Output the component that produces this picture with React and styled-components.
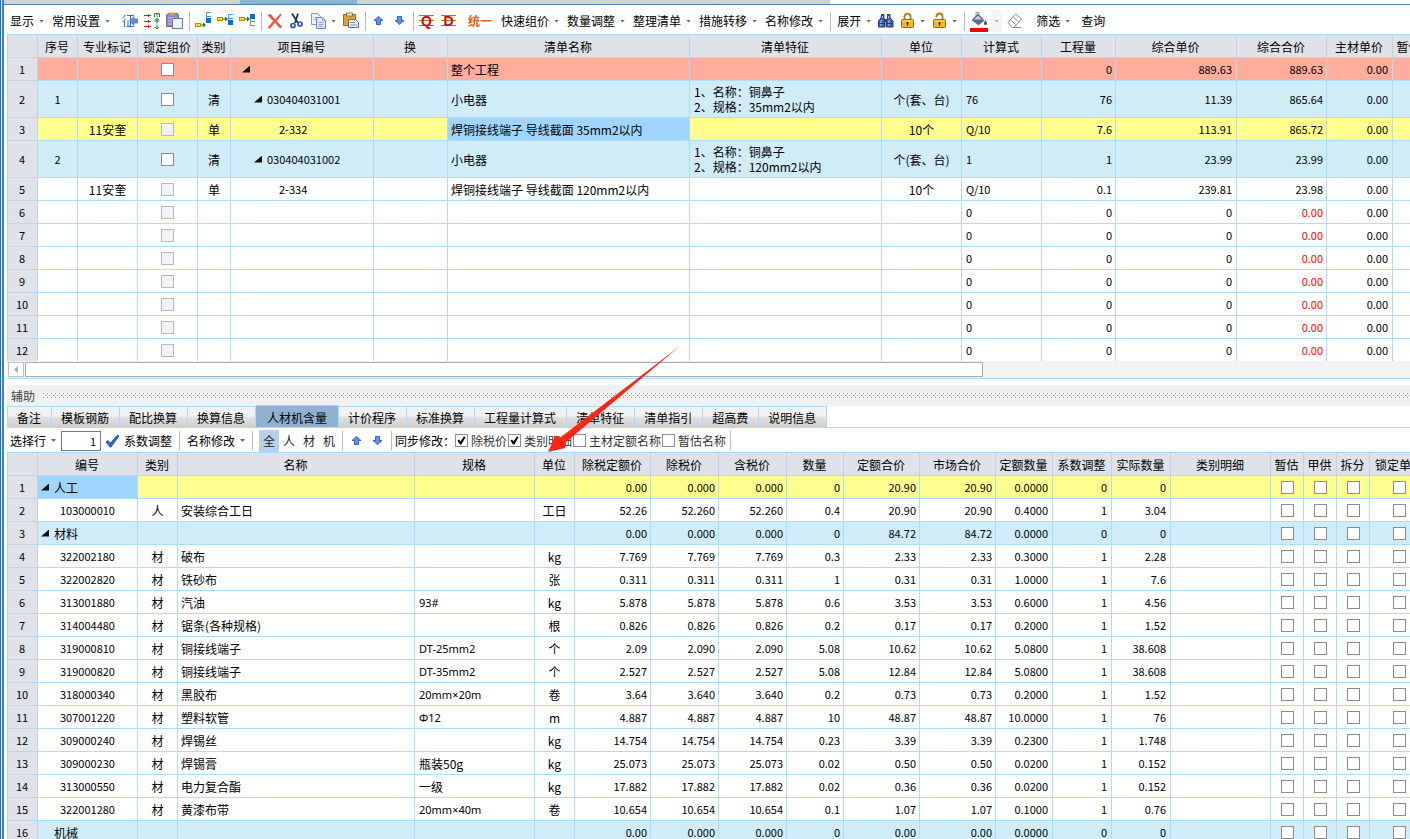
import React from 'react';
import styled, { createGlobalStyle, css } from 'styled-components';

const GlobalStyle = createGlobalStyle`
  * {
    box-sizing: border-box;
  }
  body {
    margin: 0;
    background: #fff;
    color: #000;
    font-family: "Noto Sans CJK SC", sans-serif;
    font-size: 12px;
    line-height: 16px;
  }
  button, input {
    font: inherit;
    color: inherit;
  }
`;

const Page = styled.div`
  position: relative;
  display: flex;
  height: 100vh;
  overflow: hidden;
`;
const WindowEdge = styled.div`
  flex: none;
  width: 4px;
  background: linear-gradient(90deg, #1272c4 0 1px, #dcebf7 1px 2px, #4a80b4 2px);
`;
const Main = styled.div`
  flex: 1;
  min-width: 0;
  display: flex;
  flex-direction: column;
`;

const DocTabs = styled.div`
  flex: none;
  display: flex;
  height: 5px;
  border-bottom: 1px solid #4a80b4;
`;
const DocTab = styled.div`
  width: 118px;
  background: ${(p) => (p.$active ? '#8fb1d2' : '#d3d3d3')};
  border-right: 1px solid #a9d8fb;
`;

const Toolbar = styled.div`
  flex: none;
  display: flex;
  align-items: center;
  height: ${(p) => p.$height}px;
  padding-top: ${(p) => p.$top || 0}px;
  padding-left: 2px;
  white-space: nowrap;
  overflow: hidden;
`;
const Group = styled.div`
  display: flex;
  align-items: center;
  margin-left: ${(p) => p.$lead || 0}px;
`;
const Separator = styled.span`
  flex: none;
  width: 1px;
  height: 19px;
  margin: 0 2px 0 3px;
  background: #b9b9b9;
`;
const ToolButton = styled.button`
  display: flex;
  align-items: center;
  gap: ${(p) => p.$gap || 5}px;
  padding: 0 4px;
  border: 0;
  background: none;
  color: ${(p) => p.$color || '#000'};
  font-weight: ${(p) => (p.$bold ? 700 : 400)};
`;
const IconButton = styled.button`
  display: flex;
  align-items: center;
  padding: 0 3px;
  border: 0;
  background: none;
`;
const Caret = styled.span`
  width: 5px;
  height: 3px;
  background: ${(p) => (p.$pale ? '#aaa' : '#666')};
  clip-path: polygon(0 0, 100% 0, 50% 100%);
`;
const DropButton = styled.button`
  display: flex;
  align-items: center;
  height: 22px;
  padding: ${(p) => (p.$shaded ? '0 3px' : '0 4px 0 1px')};
  border: 0;
  background: ${(p) => (p.$shaded ? '#f5f5f5' : 'none')};
`;
const KindButton = styled.button`
  width: 20px;
  height: 22px;
  padding: 0;
  border: 0;
  color: #222;
  background: ${(p) => (p.$active ? '#b9d1e8' : 'none')};
`;
const RowInput = styled.input`
  width: 40px;
  height: 20px;
  margin-left: 1px;
  padding: 0 4px;
  border: 1px solid #7a7a7a;
  font-size: 11px;
  text-align: right;
`;
const CheckLabel = styled.label`
  display: flex;
  align-items: center;
  gap: 3px;
  margin-right: 1px;
  color: #333;
`;
const CheckBox = styled.input`
  appearance: none;
  position: relative;
  flex: none;
  display: block;
  width: 13px;
  height: 13px;
  margin: 0;
  border: 1px solid #8c8c8c;
  background: #fff;
  &:disabled {
    border-color: #b9b9b9;
    background: #f2f3f6;
  }
  &:checked::after {
    content: '';
    position: absolute;
    inset: 1px;
    background: #000;
    clip-path: polygon(5% 50%, 22% 40%, 38% 62%, 76% 5%, 95% 10%, 48% 95%, 32% 95%);
  }
`;

const Pane = styled.div`
  flex: ${(p) => (p.$grow ? '1' : 'none')};
  min-height: 0;
  margin-left: 3px;
  border-top: 1px solid #a9dcfb;
  border-left: 1px solid #a9dcfb;
  overflow: hidden;
`;
const Grid = styled.table`
  table-layout: fixed;
  width: ${(p) => p.$width}px;
  border-collapse: separate;
  border-spacing: 0;
  th, td {
    height: 23px;
    padding: 0;
    border-right: 1px solid #aedcfb;
    border-bottom: 1px solid #aedcfb;
    overflow: hidden;
    white-space: nowrap;
    font-weight: 400;
    line-height: 15px;
  }
  th {
    padding-right: 1px;
    border-color: #c3d3e2;
    background: #dfe2e8;
    text-align: center;
  }
`;
const tones = {
  red: '#ffad9d',
  blue: '#cfecf7',
  yellow: '#ffff8f',
};
const Row = styled.tr`
  background: ${(p) => tones[p.$tone] || '#fff'};
  && > * {
    height: ${(p) => (p.$tall ? 37 : 23)}px;
  }
  ${(p) => p.$last && css`
    && > * {
      height: 22px;
      border-bottom: 0;
    }
  `}
`;
const RowHead = styled.th`
  font-size: 11px;
`;
const Cell = styled.td`
  && {
    padding: 0 ${(p) => p.$pad || 3}px;
    text-align: ${(p) => p.$align || 'left'};
    font-size: ${(p) => (p.$num ? 11 : 12)}px;
    color: ${(p) => p.$color || '#000'};
    background: ${(p) => (p.$selected ? '#9fd5ff' : 'transparent')};
  }
  ${(p) => p.$wrap && '&& { white-space: pre-line; }'}
  ${(p) => p.$latin && '&& { font-family: "Noto Sans", "Noto Sans CJK SC", sans-serif; }'}
  input {
    margin: 0 auto;
  }
`;
const TreeLabel = styled.span`
  display: flex;
  align-items: center;
  gap: 5px;
  padding-left: ${(p) => p.$indent}px;
`;
const Expander = styled.span`
  width: 8px;
  height: 7px;
  background: ${(p) => (p.$leaf ? 'none' : '#111')};
  clip-path: polygon(100% 0, 100% 100%, 0 100%);
`;

const ScrollTrack = styled.div`
  flex: none;
  display: flex;
  align-items: center;
  gap: 1px;
  height: 18px;
  margin-left: 3px;
  padding-left: 1px;
  border-bottom: 1px solid #a9dcfb;
  background: #f3f3f3;
`;
const ScrollArrow = styled.button`
  display: flex;
  align-items: center;
  justify-content: center;
  width: 16px;
  height: 15px;
  padding: 0;
  border: 1px solid #c0c0c0;
  background: #fff;
  &::before {
    content: '';
    width: 4px;
    height: 7px;
    background: #aaa;
    clip-path: polygon(100% 0, 100% 100%, 0 50%);
  }
`;
const ScrollThumb = styled.div`
  width: 68.3%;
  height: 15px;
  border: 1px solid #a9a9a9;
  background: #fff;
`;

const Splitter = styled.div`
  flex: none;
  display: flex;
  align-items: center;
  gap: 8px;
  height: 21px;
  margin: 6px 0 0 3px;
  padding-left: 4px;
  background: #f1f1f1;
  color: #444;
`;
const Grip = styled.div`
  flex: 1;
  height: 5px;
  background-image:
    conic-gradient(from 0deg at 1px 1px, transparent 75%, #a0a0a0 0),
    conic-gradient(from 0deg at 1px 1px, transparent 75%, #a0a0a0 0);
  background-size: 4px 4px;
  background-position: 0 0, 2px 2px;
`;
const TabBar = styled.div`
  flex: none;
  display: flex;
  align-items: flex-end;
  height: 22px;
  margin-left: 3px;
  border-bottom: 1px solid #a9dcfb;
`;
const Tab = styled.button`
  height: ${(p) => (p.$active ? 22 : 21)}px;
  padding: ${(p) => (p.$active ? '2px 11px 0' : '2px 10px 0 9px')};
  border: 1px solid #a9dcfb;
  border-width: 1px 1px 0 0;
  white-space: nowrap;
  background: ${(p) => (p.$active ? '#8fb1d2' : 'linear-gradient(#f2f2f2 0 45%, #e2e2e2 50%, #cfcfcf)')};
  &:first-child {
    border-left-width: 1px;
  }
`;
const ArrowMark = styled.svg`
  position: absolute;
  left: 546px;
  top: 344px;
  pointer-events: none;
`;

/* ---------- icons ---------- */

const Icon = ({ w = 16, h = 18, children }) => (
  <svg width={w} height={h} viewBox={`0 0 ${w} ${h}`} fill="none" aria-hidden="true">{children}</svg>
);

const QuotaIcon = () => (
  <Icon w={16} h={18}>
    <path d="M3.500 3 .5 6.500M4 6.500 .5 10M2.500 8.500V15M5 3.500h7M8.500 3.500v11M6 8v6.500M4.500 14.500H12" stroke="#2f6fc0" />
    <path d="M7.500 9 12 4.500V7h4v4h-4v2.500z" fill="#5f8fdc" stroke="#3765b5" strokeWidth=".6" />
  </Icon>
);
const RowsIcon = () => (
  <Icon>
    <path d="M0 3.500h7M0 9.500h7M0 14.500h7M4.500 2v3M4.500 8v3M4.500 13v3" stroke="#e01818" />
    <path d="M10.500 5V1.500h5V5M13 1.500V5M13 6.500v5M10.500 9h5M11 8l2-1.500L15 8M13 12.500V17M11 15l2 2 2-2" stroke="#1d8a2a" />
  </Icon>
);
const ClipPageIcon = () => (
  <Icon w={17} h={18}>
    <path d="M.5 3 3 1.500h8.500l1 1.500v11.500H.5z" fill="#9089c4" stroke="#6b63a0" />
    <path d="M2 6h9M2 9h5M2 12h4" stroke="#c9c5e6" />
    <path d="M3.500.5h5v3h-5z" fill="#c9a24a" />
    <path d="M6.500 6.500h10v10h-10z" fill="#eef3fc" stroke="#5b79ad" />
  </Icon>
);
const InsertIcon = ({ open, solid, yellow }) => (
  <Icon>
    <path d={`M16 ${open}h-4.500v4H16`} stroke="#3a9ae6" />
    <path d="M11.500 3v6" stroke="#3a9ae6" />
    <rect x="11" y={solid} width="5" height="5" fill="#0a6fd0" />
    <rect x=".5" y={yellow} width="5" height="3" fill="#ffe11a" stroke="#b98a00" />
    <path d={`M6 ${yellow + 1.5}h4`} stroke="#1d7d20" />
    <path d={`M8 ${yellow - 1}l3 2.500-3 2.500z`} fill="#1d7d20" />
  </Icon>
);
const DeleteIcon = () => (
  <Icon>
    <path d="M1 3.500 3 2l5 5.500L13.500 2l1 .5L9.500 9l5.500 6-2 1-5-5.500L2.500 16.500 1 15.500 6.500 9z" fill="#ee5a3a" stroke="#d8402a" strokeWidth=".5" />
  </Icon>
);
const CutIcon = () => (
  <Icon>
    <path d="M3 1.500 9 11M9 1.500 6 11" stroke="#24364f" strokeWidth="1.800" />
    <circle cx="4" cy="13.500" r="2" stroke="#2458c4" strokeWidth="1.700" />
    <circle cx="11" cy="12" r="2" stroke="#2458c4" strokeWidth="1.700" />
  </Icon>
);
const CopyIcon = () => (
  <Icon>
    <path d="M.5 1.500h6l3 3v8h-9z" fill="#f0f5fd" stroke="#7c9bd0" />
    <path d="M2.500 5.500h4M2.500 7.500h4" stroke="#a6bde2" />
    <path d="M5.500 5.500h6l3 3v8h-9z" fill="#e4edfb" stroke="#6282c0" />
    <path d="M11.500 5.500v3h3M7.500 10.500h5M7.500 12.500h5M7.500 14.500h5" stroke="#8aa6d8" />
  </Icon>
);
const PasteIcon = () => (
  <Icon>
    <path d="M.5 2.500h12v11H.5z" fill="#dca23c" stroke="#9a6a1c" />
    <path d="M3.500 1h6v3h-6z" fill="#f3e3b8" stroke="#7a5a20" strokeWidth=".8" />
    <path d="M5.500 7.500h7l3 3v5h-10z" fill="#e6ecf5" stroke="#5e6f8c" />
    <path d="M7 10.500h5M7 13h7" stroke="#8794ab" />
  </Icon>
);
const MoveIcon = ({ down }) => (
  <Icon w={15} h={16}>
    <path
      d={down ? 'M5.500 3.500h4v4h2.500L7.500 11.500 3 7.500h2.500z' : 'M5.500 11.500h4v-4h2.500L7.500 3.500 3 7.500h2.500z'}
      fill="#5c93f0"
      stroke="#2a56bc"
      strokeWidth=".9"
    />
  </Icon>
);
const LetterIcon = ({ letter }) => (
  <Icon>
    <path d="M0 3.500h15M0 8.500h15M0 13.500h15" stroke="#8c8c10" />
    <text x="7.500" y="14" textAnchor="middle" fontFamily="Liberation Sans, sans-serif" fontWeight="700" fontSize="14" fill="#e60000">{letter}</text>
  </Icon>
);
const FindIcon = () => (
  <Icon>
    <path d="M3.500 2.500H6V6l1 3v6H.5V9L3 6zM9.500 2.500H12V6l3 3v6H8.500V9l1-3z" fill="#3f62a8" stroke="#1e3976" />
    <path d="M7 7h1.500v3H7z" fill="#1e3976" />
    <path d="M3 8v6M11 8v6M4.500 4v2M10.500 4v2" stroke="#b9cdf0" />
    <path d="M1 11.500h6M9 11.500h6" stroke="#1e3976" />
  </Icon>
);
const LockIcon = ({ open }) => (
  <Icon>
    <path d={open ? 'M4.500 5.500V4a3 2.500 0 0 1 6 0v5' : 'M4.500 8V4.500a3 2.800 0 0 1 6 0V8'} stroke="#b07a18" strokeWidth="1.800" />
    <rect x="1.500" y="7.500" width="12" height="8" rx="1" fill="#f2b233" stroke="#a0660c" />
    <path d="M2.500 9h10" stroke="#ffe08a" />
    <path d="M7.500 10v3.500M6.500 11h2" stroke="#3a2503" strokeWidth="1.300" />
  </Icon>
);
const FillIcon = () => (
  <Icon w={18} h={22}>
    <path d="M6 6V2.500h3V6" stroke="#8b97a4" />
    <path d="m8 4 6 6.500-5.500 4.500-6.500-5z" fill="#5d6f84" stroke="#46566a" strokeWidth=".6" />
    <path d="M4 9.500 8 5.500l3.500 4z" fill="#c7d0db" />
    <path d="M15.500 10c2.500 3.500 1.500 5 0 5s-2.500-1.500 0-5z" fill="#46566a" />
    <path d="M0 18h18v4H0z" fill="#fe0000" />
  </Icon>
);
const EraserIcon = () => (
  <Icon>
    <path d="M1 10.500 8.500 2l6 5L7 15.500H5zM3.500 8l6 5M7 15.500h7.500M6 5l6 5" stroke="#8f8f8f" />
  </Icon>
);
const ConfirmIcon = () => (
  <Icon w={15} h={14}>
    <path d="m1 8 2-1.500L5.500 9 12.500 1l1.500 1L6 13H5z" fill="#2f66e0" stroke="#1a3fae" strokeWidth=".8" />
  </Icon>
);

/* ---------- small parts ---------- */

const Menu = ({ children }) => (
  <ToolButton type="button">{children}<Caret /></ToolButton>
);

const Tick = ({ label, ...rest }) => (
  <CheckBox type="checkbox" aria-label={label} {...rest} />
);

/* ---------- data ---------- */

const billColumns = [
  ['', 30], ['序号', 40], ['专业标记', 60], ['锁定组价', 60], ['类别', 33], ['项目编号', 143], ['换', 74],
  ['清单名称', 242], ['清单特征', 192], ['单位', 80], ['计算式', 80], ['工程量', 74], ['综合单价', 121],
  ['综合合价', 90], ['主材单价', 66], ['暂估单价', 57],
];

const billRows = [
  { tone: 'red', level: 1, name: '整个工程', qty: '0', price: '889.63', total: '889.63', main: '0.00' },
  { tone: 'blue', tall: true, seq: '1', kind: '清', level: 2, code: '030404031001', name: '小电器', feature: '1、名称：铜鼻子\n2、规格：35mm2以内', unit: '个(套、台)', formula: '76', qty: '76', price: '11.39', total: '865.64', main: '0.00' },
  { tone: 'yellow', mark: '11安奎', locked: true, kind: '单', level: 3, code: '2-332', name: '焊铜接线端子 导线截面 35mm2以内', selected: true, unit: '10个', formula: 'Q/10', qty: '7.6', price: '113.91', total: '865.72', main: '0.00' },
  { tone: 'blue', tall: true, seq: '2', kind: '清', level: 2, code: '030404031002', name: '小电器', feature: '1、名称：铜鼻子\n2、规格：120mm2以内', unit: '个(套、台)', formula: '1', qty: '1', price: '23.99', total: '23.99', main: '0.00' },
  { mark: '11安奎', locked: true, kind: '单', level: 3, code: '2-334', name: '焊铜接线端子 导线截面 120mm2以内', unit: '10个', formula: 'Q/10', qty: '0.1', price: '239.81', total: '23.98', main: '0.00' },
  ...Array.from({ length: 7 }, () => ({ empty: true, locked: true, formula: '0', qty: '0', price: '0', total: '0.00', main: '0.00' })),
];

const resourceColumns = [
  ['', 30], ['编号', 100], ['类别', 40], ['名称', 237], ['规格', 120], ['单位', 40], ['除税定额价', 76],
  ['除税价', 68], ['含税价', 68], ['数量', 57], ['定额合价', 76], ['市场合价', 76], ['定额数量', 57],
  ['系数调整', 59], ['实际数量', 59], ['类别明细', 100], ['暂估', 33], ['甲供', 33], ['拆分', 33], ['锁定单价', 60],
];

// item: code, kind, name, spec, unit
const resourceRows = [
  { group: '人工', tone: 'yellow', open: true, selected: true, nums: ['0.00', '0.000', '0.000', '0', '20.90', '20.90', '0.0000', '0', '0'] },
  { item: ['103000010', '人', '安装综合工日', '', '工日'], nums: ['52.26', '52.260', '52.260', '0.4', '20.90', '20.90', '0.4000', '1', '3.04'] },
  { group: '材料', tone: 'blue', open: true, nums: ['0.00', '0.000', '0.000', '0', '84.72', '84.72', '0.0000', '0', '0'] },
  { item: ['322002180', '材', '破布', '', 'kg'], nums: ['7.769', '7.769', '7.769', '0.3', '2.33', '2.33', '0.3000', '1', '2.28'] },
  { item: ['322002820', '材', '铁砂布', '', '张'], nums: ['0.311', '0.311', '0.311', '1', '0.31', '0.31', '1.0000', '1', '7.6'] },
  { item: ['313001880', '材', '汽油', '93#', 'kg'], nums: ['5.878', '5.878', '5.878', '0.6', '3.53', '3.53', '0.6000', '1', '4.56'] },
  { item: ['314004480', '材', '锯条(各种规格)', '', '根'], nums: ['0.826', '0.826', '0.826', '0.2', '0.17', '0.17', '0.2000', '1', '1.52'] },
  { item: ['319000810', '材', '铜接线端子', 'DT-25mm2', '个'], nums: ['2.09', '2.090', '2.090', '5.08', '10.62', '10.62', '5.0800', '1', '38.608'] },
  { item: ['319000820', '材', '铜接线端子', 'DT-35mm2', '个'], nums: ['2.527', '2.527', '2.527', '5.08', '12.84', '12.84', '5.0800', '1', '38.608'] },
  { item: ['318000340', '材', '黑胶布', '20mm×20m', '卷'], nums: ['3.64', '3.640', '3.640', '0.2', '0.73', '0.73', '0.2000', '1', '1.52'] },
  { item: ['307001220', '材', '塑料软管', 'Φ12', 'm'], nums: ['4.887', '4.887', '4.887', '10', '48.87', '48.87', '10.0000', '1', '76'] },
  { item: ['309000240', '材', '焊锡丝', '', 'kg'], nums: ['14.754', '14.754', '14.754', '0.23', '3.39', '3.39', '0.2300', '1', '1.748'] },
  { item: ['309000230', '材', '焊锡膏', '瓶装50g', 'kg'], nums: ['25.073', '25.073', '25.073', '0.02', '0.50', '0.50', '0.0200', '1', '0.152'] },
  { item: ['313000550', '材', '电力复合酯', '一级', 'kg'], nums: ['17.882', '17.882', '17.882', '0.02', '0.36', '0.36', '0.0200', '1', '0.152'] },
  { item: ['322001280', '材', '黄漆布带', '20mm×40m', '卷'], nums: ['10.654', '10.654', '10.654', '0.1', '1.07', '1.07', '0.1000', '1', '0.76'] },
  { group: '机械', tone: 'blue', nums: ['0.00', '0.000', '0.000', '0', '0.00', '0.00', '0.0000', '0', '0'] },
];

const detailTabs = [
  '备注', '模板钢筋', '配比换算', '换算信息', '人材机含量', '计价程序', '标准换算', '工程量计算式',
  '清单特征', '清单指引', '超高费', '说明信息',
];

const sumWidth = (columns) => columns.reduce((total, [, width]) => total + width, 0);
const hasCjk = (text) => /[\u4e00-\u9fff]/.test(text || '');

function GridHead({ columns }) {
  return (
    <>
      <colgroup>
        {columns.map(([title, width], i) => <col key={i} width={width} />)}
      </colgroup>
      <thead>
        <tr>{columns.map(([title], i) => <th key={i} scope="col">{title}</th>)}</tr>
      </thead>
    </>
  );
}

function MainToolbar() {
  return (
    <Toolbar $height={29} $top={3}>
      <Group>
        <Menu>显示</Menu>
        <Menu>常用设置</Menu>
      </Group>
      <Group $lead={5}>
        <IconButton type="button" aria-label="特征"><QuotaIcon /></IconButton>
        <IconButton type="button" aria-label="行"><RowsIcon /></IconButton>
        <IconButton type="button" aria-label="剪贴板"><ClipPageIcon /></IconButton>
      </Group>
      <Separator />
      <IconButton type="button" aria-label="插入下方"><InsertIcon open={0.5} solid={6} yellow={11.5} /></IconButton>
      <IconButton type="button" aria-label="插入"><InsertIcon open={2.5} solid={8} yellow={5.5} /></IconButton>
      <IconButton type="button" aria-label="插入上方"><InsertIcon open={9.5} solid={2} yellow={5.5} /></IconButton>
      <Separator />
      <IconButton type="button" aria-label="删除"><DeleteIcon /></IconButton>
      <IconButton type="button" aria-label="剪切"><CutIcon /></IconButton>
      <IconButton type="button" aria-label="复制"><CopyIcon /></IconButton>
      <DropButton type="button" aria-label="复制选项"><Caret /></DropButton>
      <IconButton type="button" aria-label="粘贴"><PasteIcon /></IconButton>
      <Separator />
      <IconButton type="button" aria-label="上移"><MoveIcon /></IconButton>
      <IconButton type="button" aria-label="下移"><MoveIcon down /></IconButton>
      <Separator />
      <IconButton type="button" aria-label="清单"><LetterIcon letter="Q" /></IconButton>
      <IconButton type="button" aria-label="定额"><LetterIcon letter="D" /></IconButton>
      <Group $lead={4}>
        <ToolButton type="button" $color="#d2691e" $bold>统一</ToolButton>
      </Group>
      <Group $lead={1}>
        <Menu>快速组价</Menu>
        <Menu>数量调整</Menu>
        <Menu>整理清单</Menu>
        <Menu>措施转移</Menu>
        <Menu>名称修改</Menu>
      </Group>
      <Separator />
      <Menu>展开</Menu>
      <IconButton type="button" aria-label="查找"><FindIcon /></IconButton>
      <IconButton type="button" aria-label="锁定"><LockIcon /></IconButton>
      <DropButton type="button" aria-label="锁定选项"><Caret /></DropButton>
      <IconButton type="button" aria-label="解锁"><LockIcon open /></IconButton>
      <DropButton type="button" aria-label="解锁选项"><Caret /></DropButton>
      <Separator />
      <IconButton type="button" aria-label="填充颜色"><FillIcon /></IconButton>
      <DropButton type="button" aria-label="颜色选项" $shaded><Caret $pale /></DropButton>
      <Group $lead={2}>
        <IconButton type="button" aria-label="清除颜色"><EraserIcon /></IconButton>
      </Group>
      <Group $lead={6}>
        <Menu>筛选</Menu>
      </Group>
      <Group $lead={3}>
        <ToolButton type="button">查询</ToolButton>
      </Group>
    </Toolbar>
  );
}

function BillGrid() {
  return (
    <Grid $width={sumWidth(billColumns)}>
      <GridHead columns={billColumns} />
      <tbody>
        {billRows.map((row, i) => (
          <Row key={i} $tone={row.tone} $tall={row.tall} $last={i === billRows.length - 1}>
            <RowHead scope="row">{i + 1}</RowHead>
            <Cell $align="center" $num>{row.seq}</Cell>
            <Cell $align="center">{row.mark}</Cell>
            <Cell><Tick label={`锁定组价 ${i + 1}`} disabled={row.locked} /></Cell>
            <Cell $align="center">{row.kind}</Cell>
            <Cell $num>
              {row.level && (
                <TreeLabel $indent={row.level * 12 - 4}>
                  <Expander $leaf={row.level === 3} />
                  {row.code}
                </TreeLabel>
              )}
            </Cell>
            <Cell />
            <Cell $selected={row.selected}>{row.name}</Cell>
            <Cell $wrap $pad={4}>{row.feature}</Cell>
            <Cell $align="center">{row.unit}</Cell>
            <Cell $num $pad={4}>{row.formula}</Cell>
            <Cell $align="right" $num>{row.qty}</Cell>
            <Cell $align="right" $num $pad={4}>{row.price}</Cell>
            <Cell $align="right" $num $color={row.empty && '#f00'}>{row.total}</Cell>
            <Cell $align="right" $num $pad={4}>{row.main}</Cell>
            <Cell />
          </Row>
        ))}
      </tbody>
    </Grid>
  );
}

function DetailToolbar() {
  return (
    <Toolbar $height={24} $top={1}>
      <Menu>选择行</Menu>
      <RowInput aria-label="行数" defaultValue="1" />
      <ToolButton type="button" $gap={4}><ConfirmIcon />系数调整</ToolButton>
      <Separator />
      <Group $lead={1}>
        <Menu>名称修改</Menu>
      </Group>
      <Separator />
      <Group $lead={4}>
        <KindButton type="button" $active>全</KindButton>
        <KindButton type="button">人</KindButton>
        <KindButton type="button">材</KindButton>
        <KindButton type="button">机</KindButton>
      </Group>
      <Separator />
      <Group $lead={1}>
        <IconButton type="button" aria-label="上移"><MoveIcon /></IconButton>
        <IconButton type="button" aria-label="下移"><MoveIcon down /></IconButton>
      </Group>
      <Separator />
      <Group $lead={1}>
        <span>同步修改：</span>
        <CheckLabel><CheckBox type="checkbox" defaultChecked />除税价</CheckLabel>
        <CheckLabel><CheckBox type="checkbox" defaultChecked />类别明细</CheckLabel>
        <CheckLabel><CheckBox type="checkbox" />主材定额名称</CheckLabel>
        <CheckLabel><CheckBox type="checkbox" />暂估名称</CheckLabel>
      </Group>
      <Separator />
    </Toolbar>
  );
}

function ResourceGrid() {
  return (
    <Grid $width={sumWidth(resourceColumns)}>
      <GridHead columns={resourceColumns} />
      <tbody>
        {resourceRows.map((row, i) => {
          const [code, kind, name, spec, unit] = row.item || [];
          return (
            <Row key={i} $tone={row.tone}>
              <RowHead scope="row">{i + 1}</RowHead>
              {row.group ? (
                <Cell $selected={row.selected}>
                  <TreeLabel $indent={0}><Expander $leaf={!row.open} />{row.group}</TreeLabel>
                </Cell>
              ) : (
                <Cell $align="center" $num>{code}</Cell>
              )}
              <Cell $align="center">{kind}</Cell>
              <Cell>{name}</Cell>
              <Cell $pad={4} $num={!hasCjk(spec)} $latin={!hasCjk(spec)}>{spec}</Cell>
              <Cell $align="center">{unit}</Cell>
              {row.nums.map((value, n) => (
                <Cell key={n} $align="right" $num $pad={n > 5 ? 4 : 3}>{value}</Cell>
              ))}
              <Cell />
              {['暂估', '甲供', '拆分', '锁定单价'].map((title) => (
                <Cell key={title}><Tick label={`${title} ${i + 1}`} /></Cell>
              ))}
            </Row>
          );
        })}
      </tbody>
    </Grid>
  );
}

function App() {
  return (
    <Page>
      <GlobalStyle />
      <WindowEdge />
      <Main>
        <DocTabs>
          {[0, 1, 2, 3, 4, 5, 6].map((n) => <DocTab key={n} $active={n === 2} />)}
        </DocTabs>
        <MainToolbar />
        <Pane>
          <BillGrid />
        </Pane>
        <ScrollTrack>
          <ScrollArrow type="button" aria-label="向左滚动" />
          <ScrollThumb />
        </ScrollTrack>
        <Splitter>辅助<Grip /></Splitter>
        <TabBar>
          {detailTabs.map((tab) => (
            <Tab key={tab} type="button" $active={tab === '人材机含量'}>{tab}</Tab>
          ))}
        </TabBar>
        <DetailToolbar />
        <Pane $grow>
          <ResourceGrid />
        </Pane>
      </Main>
      <ArrowMark width="136" height="110" viewBox="0 0 136 110" aria-hidden="true">
        <path d="M134 2 15 93 9 92 2 108 19 104 19 99z" fill="#fb2616" />
      </ArrowMark>
    </Page>
  );
}

export default App;
